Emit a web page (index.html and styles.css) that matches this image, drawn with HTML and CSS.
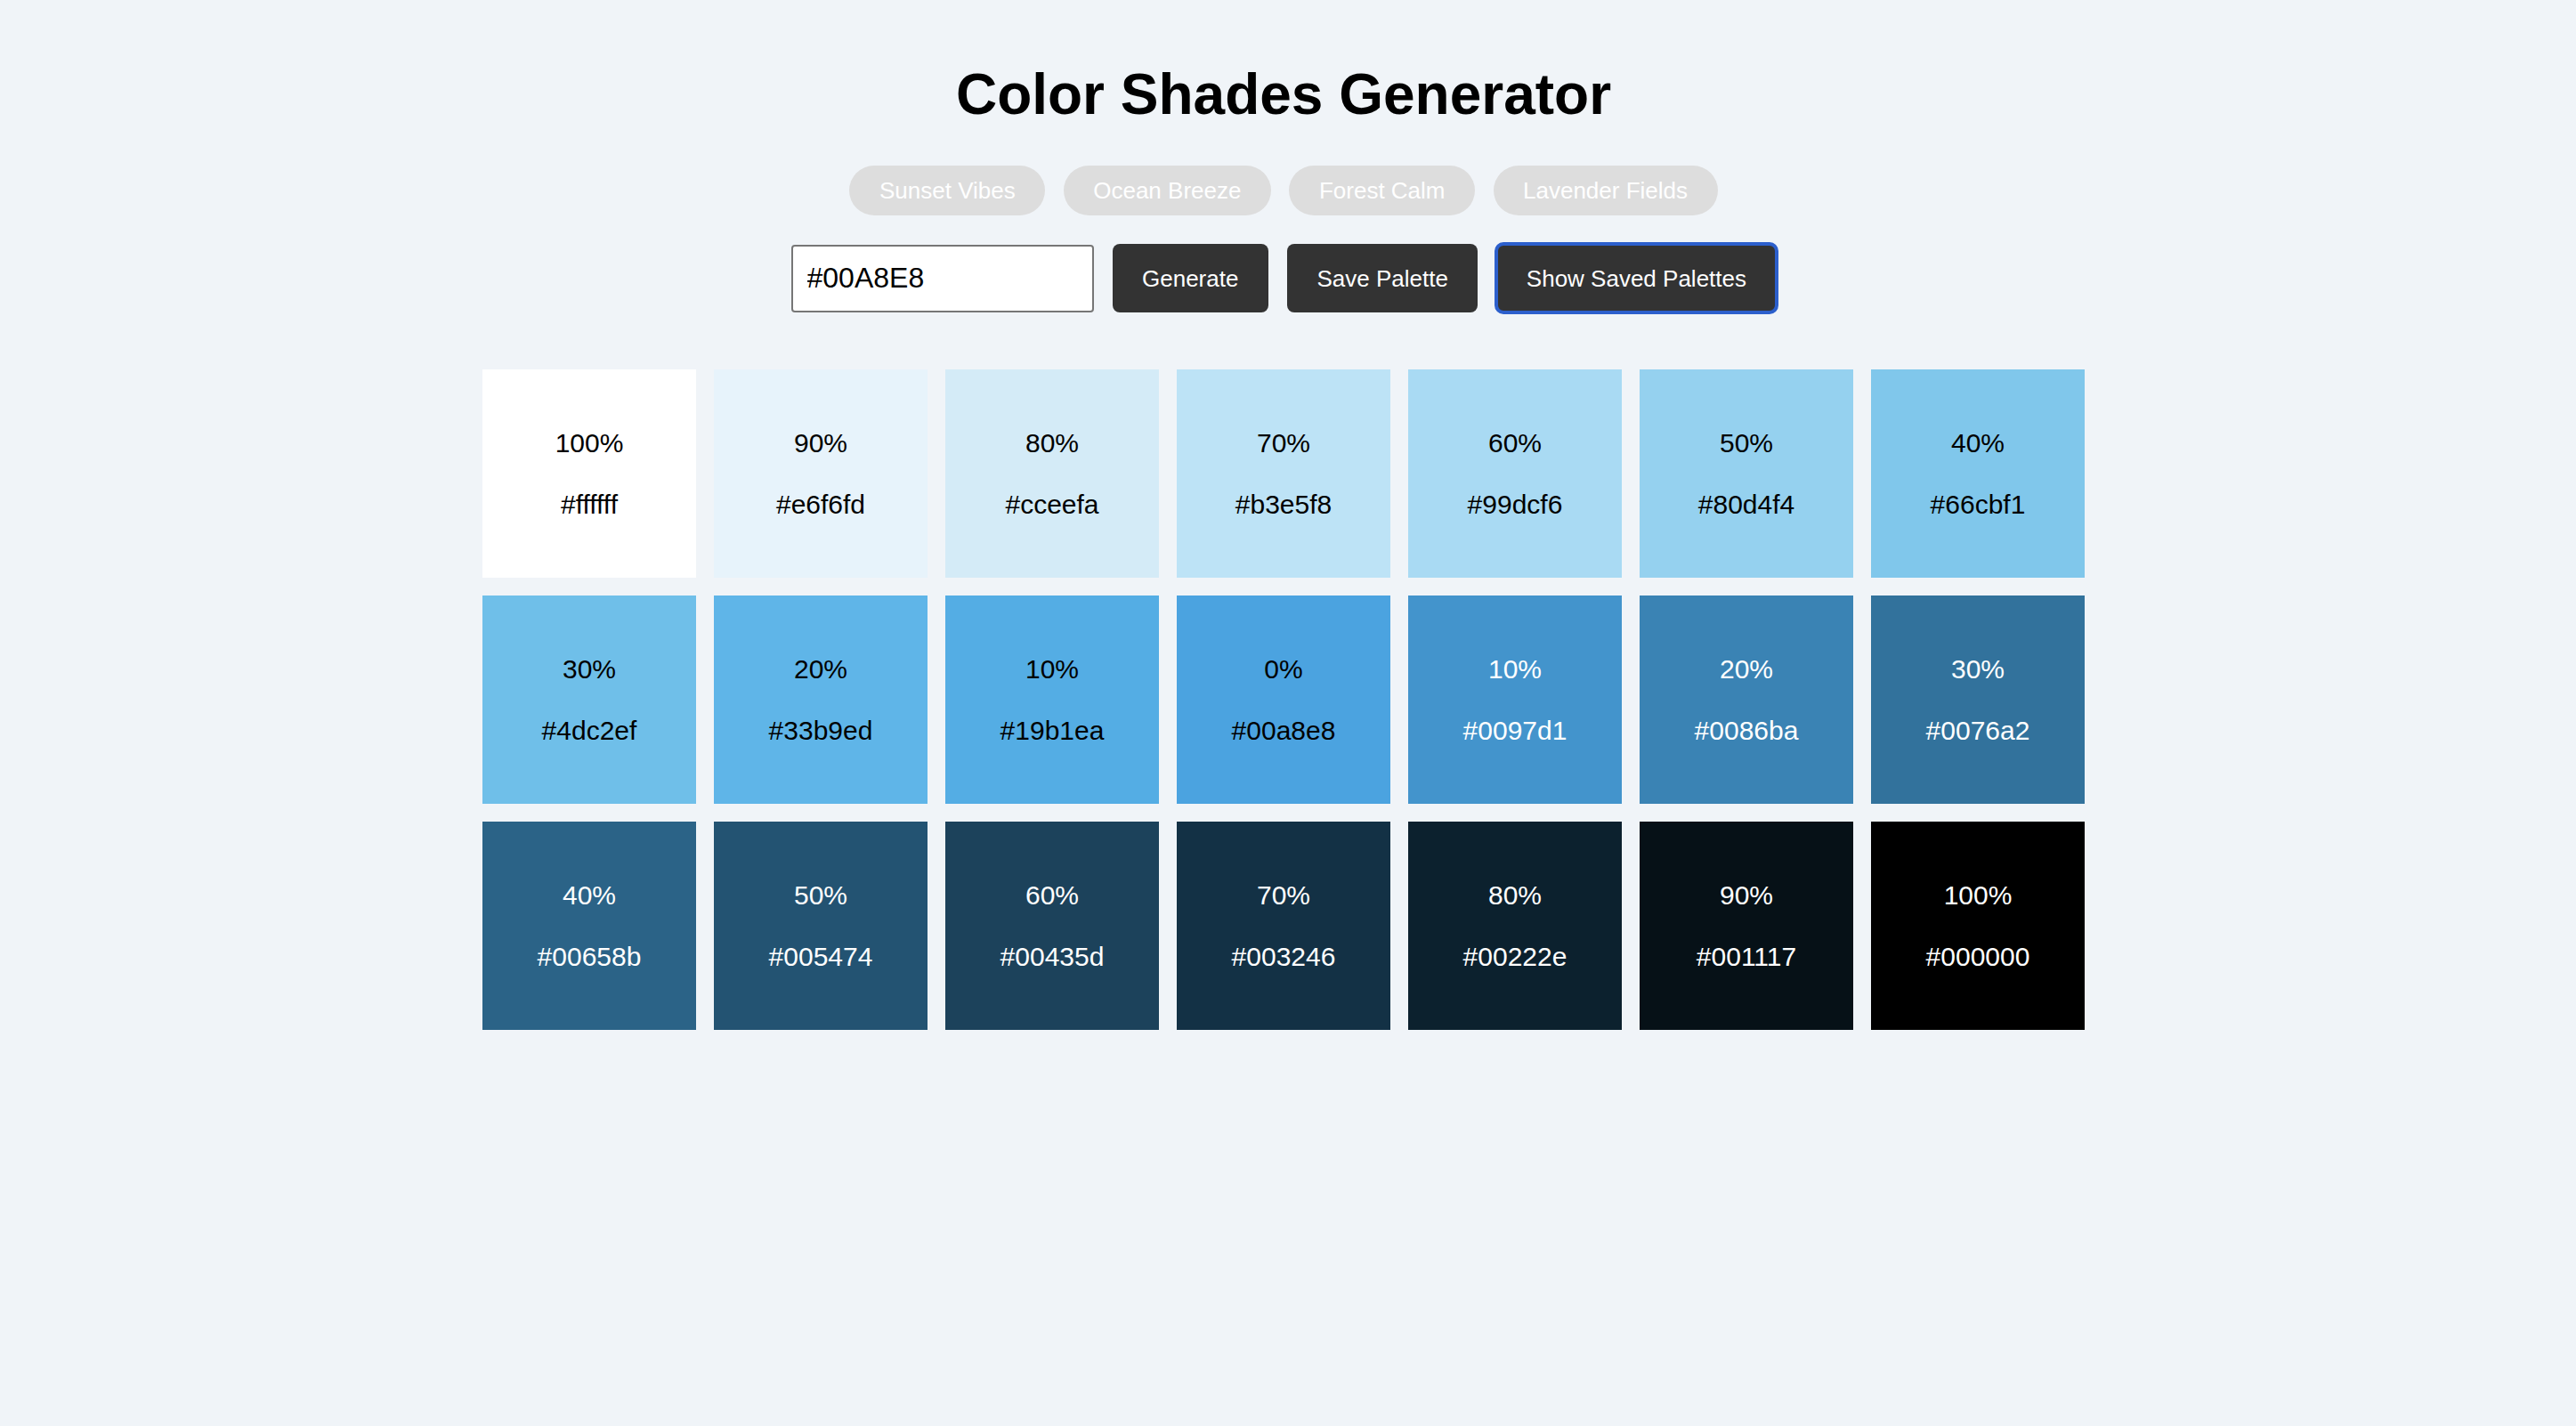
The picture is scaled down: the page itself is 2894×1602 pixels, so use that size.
FILE: index.html
```html
<!DOCTYPE html>
<html lang="en">
<head>
<meta charset="utf-8">
<title>Color Shades Generator</title>
<link rel="stylesheet" href="styles.css">
</head>
<body>
<div class="page">
  <h1 class="title">Color Shades Generator</h1>
  <div class="presets">
    <button class="pill">Sunset Vibes</button>
    <button class="pill">Ocean Breeze</button>
    <button class="pill">Forest Calm</button>
    <button class="pill">Lavender Fields</button>
  </div>
  <div class="controls">
    <input class="hex-input" type="text" value="#00A8E8">
    <button class="btn">Generate</button>
    <button class="btn">Save Palette</button>
    <button class="btn btn-focus">Show Saved Palettes</button>
  </div>
  <div class="grid">
    <div class="tile on-light" style="background:#ffffff"><span>100%</span><span>#ffffff</span></div>
    <div class="tile on-light" style="background:#e7f3fb"><span>90%</span><span>#e6f6fd</span></div>
    <div class="tile on-light" style="background:#d4ebf7"><span>80%</span><span>#cceefa</span></div>
    <div class="tile on-light" style="background:#bde3f6"><span>70%</span><span>#b3e5f8</span></div>
    <div class="tile on-light" style="background:#a9daf3"><span>60%</span><span>#99dcf6</span></div>
    <div class="tile on-light" style="background:#95d1ef"><span>50%</span><span>#80d4f4</span></div>
    <div class="tile on-light" style="background:#80c7eb"><span>40%</span><span>#66cbf1</span></div>
    <div class="tile on-light" style="background:#6fbfe9"><span>30%</span><span>#4dc2ef</span></div>
    <div class="tile on-light" style="background:#5fb5e8"><span>20%</span><span>#33b9ed</span></div>
    <div class="tile on-light" style="background:#54ade4"><span>10%</span><span>#19b1ea</span></div>
    <div class="tile on-light" style="background:#4ba3e0"><span>0%</span><span>#00a8e8</span></div>
    <div class="tile on-dark" style="background:#4394cc"><span>10%</span><span>#0097d1</span></div>
    <div class="tile on-dark" style="background:#3a83b4"><span>20%</span><span>#0086ba</span></div>
    <div class="tile on-dark" style="background:#32729c"><span>30%</span><span>#0076a2</span></div>
    <div class="tile on-dark" style="background:#2b6387"><span>40%</span><span>#00658b</span></div>
    <div class="tile on-dark" style="background:#235372"><span>50%</span><span>#005474</span></div>
    <div class="tile on-dark" style="background:#1c425b"><span>60%</span><span>#00435d</span></div>
    <div class="tile on-dark" style="background:#133145"><span>70%</span><span>#003246</span></div>
    <div class="tile on-dark" style="background:#0c212e"><span>80%</span><span>#00222e</span></div>
    <div class="tile on-dark" style="background:#061117"><span>90%</span><span>#001117</span></div>
    <div class="tile on-dark" style="background:#000000"><span>100%</span><span>#000000</span></div>
  </div>
</div>
</body>
</html>
```

FILE: styles.css
```css
html, body {
  margin: 0;
  padding: 0;
  background: #f0f4f8;
}

body {
  font-family: "Liberation Sans", Arial, Helvetica, sans-serif;
  color: #000;
}

.page {
  display: flex;
  flex-direction: column;
  align-items: center;
  padding: 69px 10px 0 0;
  min-height: 1602px;
  box-sizing: border-box;
}

.title {
  margin: 0;
  font-size: 64px;
  line-height: 74px;
  font-weight: 700;
  color: #000;
}

.presets {
  display: flex;
  gap: 20.5px;
  margin-top: 43px;
}

.pill {
  height: 56px;
  padding: 0 33.5px;
  border: none;
  border-radius: 28px;
  background: #dddddd;
  color: #ffffff;
  font-family: "Liberation Sans", Arial, Helvetica, sans-serif;
  font-size: 26px;
  line-height: 30px;
}

.controls {
  display: flex;
  align-items: center;
  gap: 21px;
  margin-top: 32px;
}

.hex-input {
  box-sizing: border-box;
  width: 340px;
  height: 76px;
  padding: 0 16px;
  border: 2px solid #767676;
  border-radius: 4px;
  background: #ffffff;
  color: #000;
  font-family: "Liberation Sans", Arial, Helvetica, sans-serif;
  font-size: 32px;
}

.btn {
  box-sizing: border-box;
  height: 77px;
  padding: 0 33.5px;
  border: none;
  border-radius: 8px;
  background: #333333;
  color: #ffffff;
  font-family: "Liberation Sans", Arial, Helvetica, sans-serif;
  font-size: 26px;
  line-height: 30px;
}

.btn-focus {
  outline: 4.5px solid #2c5fcc;
  outline-offset: -2px;
}

.grid {
  display: grid;
  grid-template-columns: repeat(7, 240px);
  grid-auto-rows: 234px;
  gap: 20px;
  margin-top: 64px;
}

.tile {
  display: flex;
  flex-direction: column;
  align-items: center;
  justify-content: center;
  gap: 35px;
  font-size: 30px;
  line-height: 34px;
}

.on-light {
  color: #000000;
}

.on-dark {
  color: #ffffff;
}
```
